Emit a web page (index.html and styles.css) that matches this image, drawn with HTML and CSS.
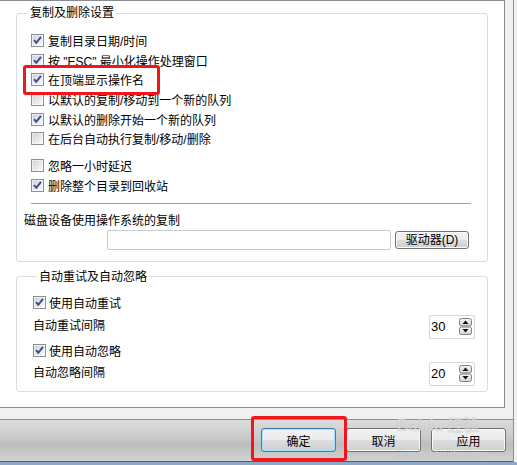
FILE: index.html
```html
<!DOCTYPE html>
<html lang="zh-CN">
<head>
<meta charset="utf-8">
<title>复制及删除设置</title>
<link rel="stylesheet" href="styles.css">
</head>
<body>
<svg class="defs" width="0" height="0" aria-hidden="true">
  <defs>
    <linearGradient id="cbg" x1="0" y1="0" x2="1" y2="1">
      <stop offset="0" stop-color="#d2d2d2"/>
      <stop offset="1" stop-color="#fafafa"/>
    </linearGradient>
    <linearGradient id="spg" x1="0" y1="0" x2="0" y2="1">
      <stop offset="0" stop-color="#f6f6f6"/>
      <stop offset="1" stop-color="#d4d4d4"/>
    </linearGradient>
    <symbol id="cb-off" viewBox="0 0 13 13">
      <rect x="0.5" y="0.5" width="12" height="12" fill="#fff" stroke="#8e8f8f"/>
      <rect x="1.5" y="1.5" width="10" height="10" fill="url(#cbg)"/>
    </symbol>
    <symbol id="cb-on" viewBox="0 0 13 13">
      <rect x="0.5" y="0.5" width="12" height="12" fill="#fff" stroke="#8e8f8f"/>
      <rect x="1.5" y="1.5" width="10" height="10" fill="url(#cbg)"/>
      <path d="M3 6.2 L5.3 8.8 L10 2.8" fill="none" stroke="#3a4c92" stroke-width="2"/>
    </symbol>
    <symbol id="spinbtn" viewBox="0 0 13 17">
      <rect x="0.5" y="0.5" width="12" height="7.5" rx="2" fill="url(#spg)" stroke="#7f7f7f"/>
      <rect x="0.5" y="9" width="12" height="7.5" rx="2" fill="url(#spg)" stroke="#7f7f7f"/>
      <path d="M3.5 6 L9.5 6 L6.5 2.5 Z" fill="#111"/>
      <path d="M3.5 11 L9.5 11 L6.5 14.5 Z" fill="#111"/>
    </symbol>
  </defs>
</svg>

<div class="frame">
  <div class="pane-area">
    <div class="panel">
      <fieldset class="group g1">
        <legend>复制及删除设置</legend>
        <div class="chk"><svg class="box"><use href="#cb-on"/></svg><span>复制目录日期/时间</span></div>
        <div class="chk"><svg class="box"><use href="#cb-on"/></svg><span>按 "ESC" 最小化操作处理窗口</span></div>
        <div class="chk"><svg class="box"><use href="#cb-on"/></svg><span>在顶端显示操作名</span></div>
        <div class="chk"><svg class="box"><use href="#cb-off"/></svg><span>以默认的复制/移动到一个新的队列</span></div>
        <div class="chk"><svg class="box"><use href="#cb-on"/></svg><span>以默认的删除开始一个新的队列</span></div>
        <div class="chk"><svg class="box"><use href="#cb-off"/></svg><span>在后台自动执行复制/移动/删除</span></div>
        <div class="chk spaced"><svg class="box"><use href="#cb-off"/></svg><span>忽略一小时延迟</span></div>
        <div class="chk"><svg class="box"><use href="#cb-on"/></svg><span>删除整个目录到回收站</span></div>
        <div class="sep"></div>
        <div class="disk-label">磁盘设备使用操作系统的复制</div>
        <div class="disk-row">
          <div class="text-input"></div>
          <button class="btn small" type="button">驱动器(<u>D</u>)</button>
        </div>
      </fieldset>

      <fieldset class="group g2">
        <legend>自动重试及自动忽略</legend>
        <div class="chk c2"><svg class="box"><use href="#cb-on"/></svg><span>使用自动重试</span></div>
        <div class="spin-row r1">
          <span class="spin-label">自动重试间隔</span>
          <div class="spin"><span>30</span><svg class="spin-btns"><use href="#spinbtn"/></svg></div>
        </div>
        <div class="chk c2 after-spin"><svg class="box"><use href="#cb-on"/></svg><span>使用自动忽略</span></div>
        <div class="spin-row r2">
          <span class="spin-label">自动忽略间隔</span>
          <div class="spin"><span>20</span><svg class="spin-btns"><use href="#spinbtn"/></svg></div>
        </div>
      </fieldset>
    </div>
  </div>
  <div class="toolbar">
    <button class="btn default" type="button">确定</button>
    <button class="btn" type="button">取消</button>
    <button class="btn" type="button">应用</button>
  </div>
</div>
<div class="frame-bottom"></div>

<div class="highlight hl1"></div>
<div class="highlight hl2"></div>
<div class="watermark">
  <div class="wm-top">Bai<span class="wm-du">du</span>经验</div>
  <div class="wm-url">jingyan.baidu.com</div>
</div>
</body>
</html>
```

FILE: styles.css
```css
* { box-sizing: border-box; }

html, body {
  margin: 0;
  padding: 0;
}

body {
  width: 517px;
  height: 465px;
  overflow: hidden;
  background: #f2f2f2;
  font-family: "Liberation Sans", "Noto Sans CJK SC", sans-serif;
  font-size: 12px;
  color: #000;
  position: relative;
}

.defs {
  position: absolute;
  width: 0;
  height: 0;
}

.frame {
  width: 514px;
  height: 462px;
  border-right: 1px solid #8e8e8e;
  display: flex;
  flex-direction: column;
}

.pane-area {
  height: 419px;
  background: #f0f0f0;
}

.panel {
  width: 505px;
  height: 408px;
  background: #fff;
  border-top: 1px solid #898c95;
  border-right: 1px solid #898c95;
  border-bottom: 1px solid #898c95;
  padding: 5px 0 0 16px;
}

.group {
  width: 472px;
  min-width: 0;
  margin: 0;
  border: 1px solid #d5dfe5;
  border-radius: 3px;
}

.group legend {
  margin-left: 4px;
  padding: 0 2px;
  line-height: 14px;
  font-size: 12px;
}

.g1 {
  padding: 11px 16px 11px 7px;
}

.g2 {
  margin-top: 8px;
  padding: 9px 12px 5px 16px;
}

.chk {
  display: flex;
  align-items: center;
  height: 19.6px;
  margin-left: 7px;
  white-space: nowrap;
}

.chk .box {
  width: 13px;
  height: 13px;
  flex: none;
  margin-right: 4px;
}

.chk.spaced {
  margin-top: 7.4px;
}

.chk.c2 {
  margin-left: 0;
  height: 20px;
}

.chk.c2 .box {
  margin-right: 3px;
}

.chk.after-spin {
  margin-top: 2px;
}

.sep {
  margin: 7.5px 0 0 7px;
  border-top: 1px solid #a0a0a0;
  border-bottom: 1px solid #fff;
}

.disk-label {
  margin-top: 8px;
  line-height: 16px;
}

.disk-row {
  margin-top: 1px;
  margin-right: 2px;
  height: 20px;
  display: flex;
  align-items: center;
  justify-content: flex-end;
  gap: 4px;
}

.text-input {
  width: 284px;
  height: 20px;
  border: 1px solid #c5ccd3;
  border-radius: 2px;
  background: #fff;
}

.btn {
  font-family: "Liberation Sans", "Noto Sans CJK SC", sans-serif;
  font-size: 12px;
  color: #000;
  width: 75px;
  height: 24px;
  padding: 0;
  border: 1px solid #707070;
  border-radius: 3px;
  background: linear-gradient(#f2f2f2 0%, #ebebeb 50%, #dddddd 51%, #cfcfcf 100%);
  box-shadow: inset 0 0 0 1px #fbfbfb;
}

.btn.small {
  width: 74px;
  height: 18px;
  line-height: 14px;
}

.btn.small u {
  text-decoration: none;
}

.btn.default {
  border-color: #3c7fb1;
  box-shadow: inset 0 0 0 1px #9fe2fb;
}

.spin-row {
  display: flex;
  justify-content: space-between;
  align-items: flex-start;
  height: 24px;
}

.spin-row.r1 { margin-top: 2px; }
.spin-row.r2 { margin-top: 1px; }

.spin-label {
  line-height: 20px;
  padding-top: 1px;
}

.spin {
  width: 46px;
  height: 24px;
  border: 1px solid #d3d7dc;
  border-radius: 2px;
  background: #fff;
  display: flex;
  align-items: center;
  justify-content: space-between;
  padding: 0 2px 0 1px;
  font-size: 13px;
}

.spin-btns {
  width: 13px;
  height: 17px;
}

.toolbar {
  height: 43px;
  border-top: 1px solid #8f8f8f;
  border-bottom: 1px solid #5c5c5c;
  background: linear-gradient(#dcdcdc 0%, #cbcbcb 40%, #bdbdbd 60%, #d2d2d2 100%);
  display: flex;
  justify-content: flex-end;
  align-items: flex-start;
  gap: 10px;
  padding: 8px 7px 0 0;
}

.frame-bottom {
  height: 3px;
  background: #8ea9c7;
}

.highlight {
  position: absolute;
  border: 3px solid #f2161b;
  border-radius: 3px;
}

.hl1 {
  left: 23px;
  top: 65px;
  width: 137px;
  height: 30px;
}

.hl2 {
  left: 251px;
  top: 416px;
  width: 96px;
  height: 45px;
}

.watermark {
  position: absolute;
  left: 397px;
  top: 418px;
  color: rgba(255, 255, 255, 0.5);
  text-shadow: 0 0 1px rgba(130, 130, 130, 0.5);
  pointer-events: none;
}

.wm-top {
  font-size: 16px;
  font-weight: bold;
  line-height: 16px;
}

.wm-du {
  margin-left: 2px;
  margin-right: 4px;
}

.wm-url {
  font-size: 11px;
  line-height: 12px;
  margin-top: 14px;
}
```
